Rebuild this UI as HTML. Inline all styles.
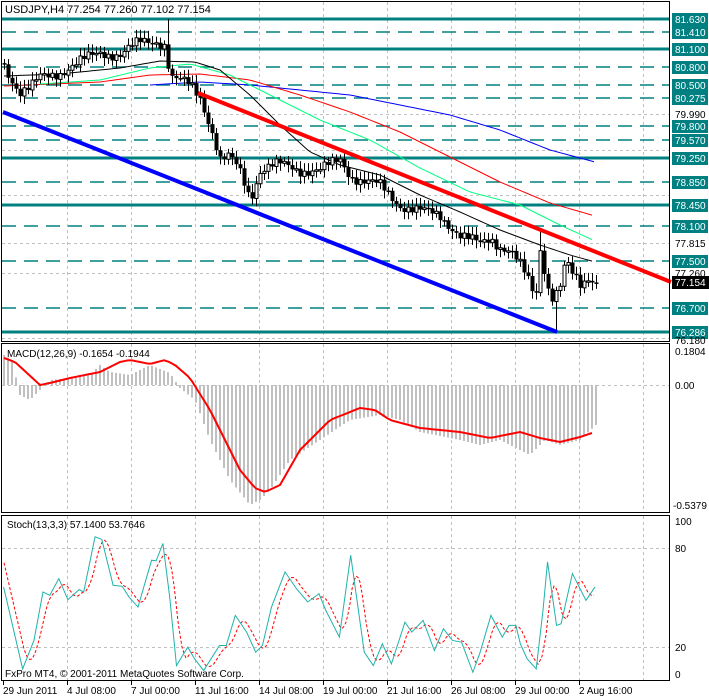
<!DOCTYPE html>
<html><head><meta charset="utf-8"><style>
html,body{margin:0;padding:0;background:#fff;width:709px;height:698px;overflow:hidden}
svg{display:block;font-family:"Liberation Sans",sans-serif}
</style></head><body>
<svg id="s" width="709" height="698" xmlns="http://www.w3.org/2000/svg">
<rect width="709" height="698" fill="#fff"/>
<g id="g"></g>
<text x="5" y="13" font-size="11">USDJPY,H4  77.254 77.260 77.102 77.154</text>
<text x="7" y="357" font-size="10">MACD(12,26,9) -0.1654 -0.1944</text>
<text x="7" y="528" font-size="10">Stoch(13,3,3) 57.1400 53.7646</text>
<text x="5" y="677" font-size="10">FxPro MT4, © 2001-2011 MetaQuotes Software Corp.</text>
</svg>
<script>
var g=document.getElementById('g'),NS='http://www.w3.org/2000/svg',h='';
function L(x1,y1,x2,y2,c,w,d){h+='<line x1="'+x1+'" y1="'+y1+'" x2="'+x2+'" y2="'+y2+'" stroke="'+c+'" stroke-width="'+(w||1)+'"'+(d?' stroke-dasharray="'+d+'"':'')+'/>';}
function P(pts,c,w,d){h+='<polyline fill="none" points="'+pts.map(function(p){return p[0]+','+p[1]}).join(' ')+'" stroke="'+c+'" stroke-width="'+(w||1)+'"'+(d?' stroke-dasharray="'+d+'"':'')+'/>';}
function T(x,y,t,c,s){h+='<text x="'+x+'" y="'+y+'" font-size="'+(s||10)+'" fill="'+(c||'#000')+'">'+t+'</text>';}
function R(x,y,w,hh,f,st){h+='<rect x="'+x+'" y="'+y+'" width="'+w+'" height="'+hh+'" fill="'+f+'"'+(st?' stroke="'+st+'"':'')+'/>';}
function interp(k,x){for(var i=0;i<k.length-1;i++){if(x<=k[i+1][0]){var t=(x-k[i][0])/(k[i+1][0]-k[i][0]);return k[i][1]+t*(k[i+1][1]-k[i][1]);}}return k[k.length-1][1];}
var vx=[];for(var x=67;x<670;x+=64)vx.push(x);
// vertical grid
[[2,341],[344,512],[516,680]].forEach(function(p){vx.forEach(function(x){L(x+.5,p[0],x+.5,p[1],'#c0c0c0',1,'3,3');});});
// horizontal grey grid price
[114,243,273,338,150,195].forEach(function(y){L(2,y+.5,670,y+.5,'#c0c0c0',1,'3,3');});
L(2,385.5,670,385.5,'#c0c0c0',1,'3,3');L(2,548.5,670,548.5,'#c0c0c0',1,'3,3');L(2,647.5,670,647.5,'#c0c0c0',1,'3,3');
// levels
var solid=[19,49,158,205,332],dash=[32,67,85,98,126,140,182,226,261,308];
solid.forEach(function(y){L(2,y,670,y,'#008080',3);});
dash.forEach(function(y){L(2,y,670,y,'#008080',1.5,'14,8');});
// MAs
function S(k,c,w){var p=[];for(var x=k[0][0];x<=k[k.length-1][0];x+=4)p.push([x,interp(k,x)]);P(p,c,w||1);}
S([[150,85],[200,82],[250,85],[300,90],[350,95],[400,105],[450,115],[500,130],[550,150],[595,162]],'#0000ff');
S([[4,86],[100,82],[150,75],[200,74],[250,80],[300,95],[350,112],[400,132],[450,157],[500,182],[550,203],[595,216]],'#ff0000');
S([[40,84],[100,80],[150,68],[190,64],[230,75],[270,95],[320,120],[370,140],[420,168],[470,192],[520,205],[560,225],[595,241]],'#00ff7f');
S([[4,76],[60,74],[120,68],[160,61],[195,62],[220,70],[250,95],[280,125],[310,152],[340,165],[380,175],[420,195],[460,212],[500,230],[540,245],[570,255],[595,262]],'#000000');
// candles
var key=[[4,65],[12,80],[20,92],[30,88],[40,78],[60,72],[80,62],[100,52],[120,55],[140,42],[155,40],[165,45],[170,78],[190,85],[200,97],[210,125],[220,160],[230,158],[240,172],[250,198],[260,170],[270,166],[280,165],[300,170],[320,170],[340,160],[350,175],[360,180],[380,186],[390,196],[400,205],[420,211],[440,216],[460,235],[480,245],[490,238],[500,246],[510,250],[520,266],[530,285],[535,302],[540,250],[545,272],[550,298],[560,286],[565,262],[570,272],[580,287],[590,276],[596,282]];
var prev=interp(key,3);
for(var x=4;x<=596;x+=4){var c=interp(key,x)+Math.sin(x*1.7)*4+Math.cos(x*.9)*3;var o=prev;var hi=Math.min(o,c)-3-Math.abs(Math.sin(x*2.3))*5,lo=Math.max(o,c)+3+Math.abs(Math.cos(x*1.3))*5;
if(x==168){hi=19;}if(x==556){lo=332;}if(x==540){hi=228;}
L(x+.5,hi,x+.5,lo,'#000',1);var t=Math.min(o,c),b=Math.max(Math.abs(o-c),1.5);
if(c<o)R(x-1,t,3,b,'#fff','#000');else R(x-1.5,t,4,b,'#000');prev=c;}
// trend lines
L(198,93,671,282,'#ff0000',4);L(3,112,557,332,'#0000ff',4);
// MACD hist
var hk=[[4,355],[12,360],[20,395],[30,400],[40,390],[50,380],[70,378],[90,375],[100,365],[110,372],[130,375],[150,365],[170,373],[180,388],[195,400],[210,440],[230,480],[250,505],[260,500],[270,490],[290,460],[320,440],[350,420],[380,415],[400,420],[420,432],[460,440],[480,445],[500,440],[530,455],[545,440],[560,445],[580,440],[596,425]];
for(var x=4;x<=596;x+=4){var y=interp(hk,x);R(x-1,Math.min(y,385),2,Math.abs(y-385)||1,'#c0c0c0');}
var sk=[[4,358],[15,362],[40,385],[50,383],[70,378],[100,372],[120,362],[130,360],[150,364],[165,360],[175,365],[190,378],[210,410],[240,470],[255,488],[265,492],[280,485],[300,450],[330,420],[360,408],[375,410],[390,420],[420,428],[460,432],[490,438],[520,432],[540,438],[560,442],[580,437],[595,432]];
S(sk,'#ff0000',2);
// stoch
var st=[[8,260],[50,505],[75,420],[95,275],[110,285],[130,235],[150,298],[175,268],[185,275],[210,110],[225,118],[250,255],[270,258],[285,290],[305,320],[335,180],[345,182],[360,130],[375,290],[390,495],[415,440],[430,475],[450,510],[485,435],[500,435],[520,345],[545,395],[565,455],[580,435],[600,320],[630,215],[655,265],[680,305],[705,280],[720,330],[750,410],[775,165],[805,455],[825,495],[845,430],[865,490],[895,365],[910,395],[935,360],[960,450],[980,385],[1000,420],[1020,425],[1045,515],[1060,460],[1085,345],[1110,410],[1125,375],[1140,375],[1150,430],[1165,475],[1185,505],[1200,330],[1210,185],[1230,375],[1240,370],[1265,220],[1295,300],[1315,260]].map(function(p){return[p[0]/2.21,500+p[1]/2.99];});
var sig=[];for(var x=4;x<=594;x+=2){var v=(interp(st,x-2)+interp(st,x-6)+interp(st,x-10))/3;sig.push([x,v]);}
P(sig,'#ff0000',1,'3,2');P(st,'#20b2aa',1);
// frames
R(1.5,1.5,668,340,'none','#000');R(1.5,343.5,668,169,'none','#000');R(1.5,515.5,668,165,'none','#000');
// right axis
[[19,'81.630'],[32,'81.410'],[49,'81.100'],[67,'80.800'],[85,'80.500'],[98,'80.275'],[126,'79.800'],[140,'79.570'],[158,'79.250'],[182,'78.850'],[205,'78.450'],[226,'78.100'],[261,'77.500'],[308,'76.700'],[332,'76.286']].forEach(function(p){R(672,p[0]-6,36,13,'#008080');T(675,p[0]+4,p[1],'#fff');});
[[114,'79.990'],[243,'77.815'],[273,'77.260']].forEach(function(p){T(675,p[0]+4,p[1]);});
T(675,344,'76.180');
R(672,276,37,13,'#000');T(675,286,'77.154','#fff');
T(675,355,'0.1804');T(675,389,'0.00');T(673,509,'-0.5379');
T(675,525,'100');T(675,552,'80');T(675,651,'20');T(675,678,'0');
// date axis
var dl=['29 Jun 2011','4 Jul 08:00','7 Jul 00:00','11 Jul 16:00','14 Jul 08:00','19 Jul 00:00','21 Jul 16:00','26 Jul 08:00','29 Jul 00:00','2 Aug 16:00'];
dl.forEach(function(t,i){var x=3+64*i;L(x+.5,681,x+.5,685,'#000');T(x,694,t);});
g.innerHTML=h;
</script>
</body></html>
